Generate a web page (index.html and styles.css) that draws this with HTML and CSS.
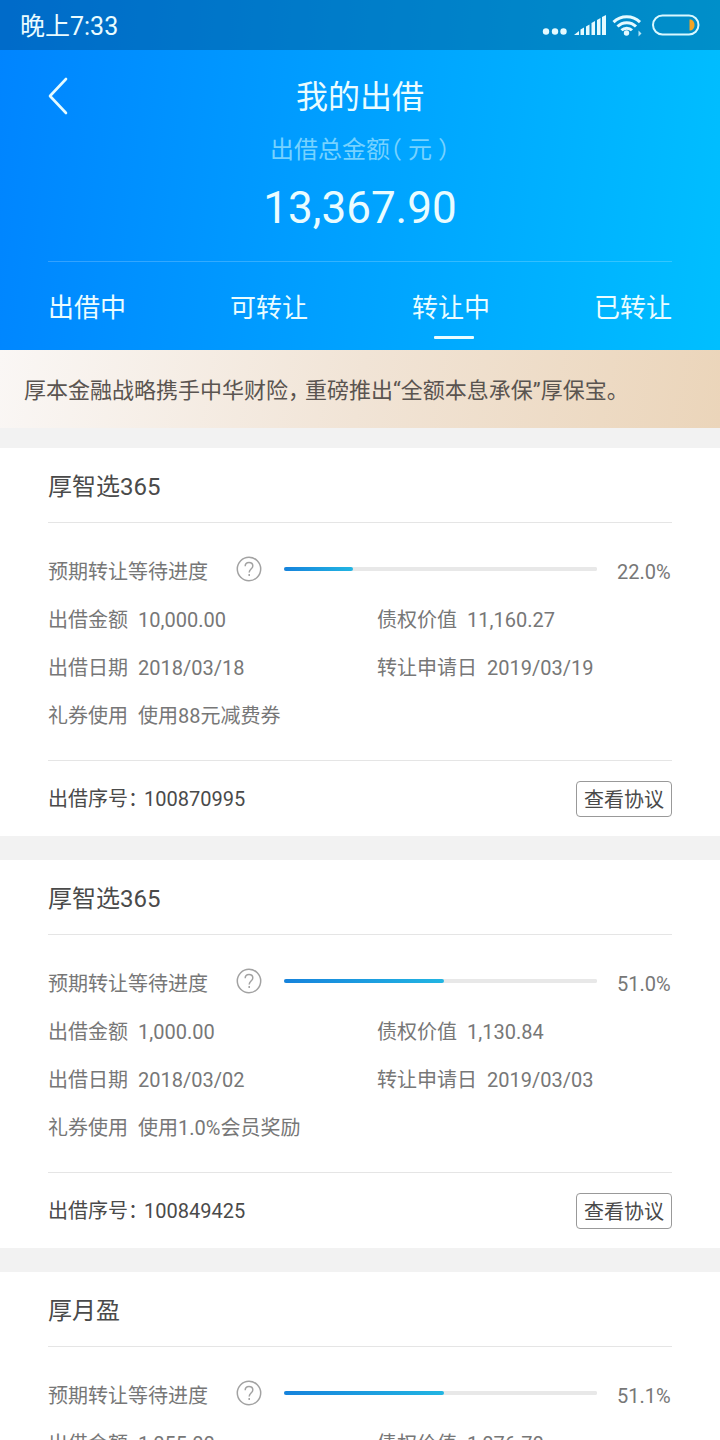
FILE: index.html
```html
<!DOCTYPE html>
<html lang="zh-CN">
<head>
<meta charset="utf-8">
<meta name="viewport" content="width=device-width, initial-scale=1">
<title>我的出借</title>
<link rel="stylesheet" href="styles.css">
</head>
<body>
<div class="app">
  <header class="hero">
    <div class="status">
      <span class="status-time">晚上7:33</span>
      <svg class="status-icons" width="160" height="30" viewBox="0 0 160 30" fill="none" aria-hidden="true">
        <g fill="#e4faff">
          <circle cx="6" cy="21.500" r="3.200"/><circle cx="15" cy="21.500" r="3.200"/><circle cx="23.500" cy="21.500" r="3.200"/>
          <path d="M34 25l5-4v4zM40.500 19.500l3.500-2v7.500h-3.500zM46 16.500l3.500-2V25H46zM51.500 13l3.500-2v14h-3.500zM57 10l3.500-2v17H57zM62 7l4-2v20h-4z"/>
          <circle cx="86.500" cy="23" r="2.700"/>
          <path d="M98.500 20.500l3 3-3 3z" opacity=".8"/>
        </g>
        <path d="M73.500 12.200a19 19 0 0 1 26.500 0M77.500 16.500a13 13 0 0 1 18.500 0M81.500 20.300a7.500 7.500 0 0 1 10.500 0" stroke="#e4faff" stroke-width="3"/>
        <rect x="113" y="5.500" width="45.500" height="19" rx="9.500" stroke="#d9f8ff" stroke-width="2"/>
        <path d="M149.500 9.500c3 0 5 2 5 5.500s-2 5.500-5 5.500z" fill="#f5a524"/>
      </svg>
    </div>
    <div class="titlebar">
      <button class="back" type="button" aria-label="返回">
        <svg width="20" height="38" viewBox="0 0 20 38" fill="none" stroke="#e4fbff" stroke-width="2.600" stroke-linecap="round" stroke-linejoin="round"><path d="M18 2L2 19l16 17"/></svg>
      </button>
      <h1 class="title">我的出借</h1>
    </div>
    <p class="total-label">出借总金额（<span class="unit">元</span>）</p>
    <p class="total">13,367.90</p>
    <nav class="tabs">
      <a class="tab" href="#lending">出借中</a>
      <a class="tab" href="#transferable">可转让</a>
      <a class="tab tab-active" href="#transferring" aria-current="page">转让中</a>
      <a class="tab" href="#transferred">已转让</a>
    </nav>
  </header>

  <p class="banner">厚本金融战略携手中华财险<span class="punct">，</span>重磅推出“全额本息承保”厚保宝。</p>

  <main class="list">
    <article class="card">
      <h2 class="card-title">厚智选365</h2>
      <div class="card-body">
        <div class="progress-row">
          <label for="p1">预期转让等待进度</label>
          <button class="help" type="button" aria-label="说明"><svg width="26" height="26" viewBox="0 0 26 26" fill="none" stroke="#a2a2a2" stroke-width="1.500"><circle cx="13" cy="13" r="11.700"/><path d="M9.200 10.300c0-2.300 1.600-3.800 3.800-3.800s3.800 1.400 3.800 3.400c0 3-3.600 3.200-3.600 6.500M13.200 18v2"/></svg></button>
          <progress class="bar" id="p1" value="22" max="100"></progress>
          <span class="percent">22.0%</span>
        </div>
        <dl class="facts">
          <div class="fact"><dt>出借金额</dt><dd>10,000.00</dd></div>
          <div class="fact"><dt>债权价值</dt><dd>11,160.27</dd></div>
          <div class="fact"><dt>出借日期</dt><dd>2018/03/18</dd></div>
          <div class="fact"><dt>转让申请日</dt><dd>2019/03/19</dd></div>
          <div class="fact"><dt>礼券使用</dt><dd>使用88元减费券</dd></div>
        </dl>
      </div>
      <footer class="card-foot">
        <span>出借序号<span class="punct">：</span>100870995</span>
        <button class="agreement" type="button">查看协议</button>
      </footer>
    </article>

    <article class="card">
      <h2 class="card-title">厚智选365</h2>
      <div class="card-body">
        <div class="progress-row">
          <label for="p2">预期转让等待进度</label>
          <button class="help" type="button" aria-label="说明"><svg width="26" height="26" viewBox="0 0 26 26" fill="none" stroke="#a2a2a2" stroke-width="1.500"><circle cx="13" cy="13" r="11.700"/><path d="M9.200 10.300c0-2.300 1.600-3.800 3.800-3.800s3.800 1.400 3.800 3.400c0 3-3.600 3.200-3.600 6.500M13.200 18v2"/></svg></button>
          <progress class="bar" id="p2" value="51" max="100"></progress>
          <span class="percent">51.0%</span>
        </div>
        <dl class="facts">
          <div class="fact"><dt>出借金额</dt><dd>1,000.00</dd></div>
          <div class="fact"><dt>债权价值</dt><dd>1,130.84</dd></div>
          <div class="fact"><dt>出借日期</dt><dd>2018/03/02</dd></div>
          <div class="fact"><dt>转让申请日</dt><dd>2019/03/03</dd></div>
          <div class="fact"><dt>礼券使用</dt><dd>使用1.0%会员奖励</dd></div>
        </dl>
      </div>
      <footer class="card-foot">
        <span>出借序号<span class="punct">：</span>100849425</span>
        <button class="agreement" type="button">查看协议</button>
      </footer>
    </article>

    <article class="card">
      <h2 class="card-title">厚月盈</h2>
      <div class="card-body">
        <div class="progress-row">
          <label for="p3">预期转让等待进度</label>
          <button class="help" type="button" aria-label="说明"><svg width="26" height="26" viewBox="0 0 26 26" fill="none" stroke="#a2a2a2" stroke-width="1.500"><circle cx="13" cy="13" r="11.700"/><path d="M9.200 10.300c0-2.300 1.600-3.800 3.800-3.800s3.800 1.400 3.800 3.400c0 3-3.600 3.200-3.600 6.500M13.200 18v2"/></svg></button>
          <progress class="bar" id="p3" value="51.1" max="100"></progress>
          <span class="percent">51.1%</span>
        </div>
        <dl class="facts">
          <div class="fact"><dt>出借金额</dt><dd>1,055.00</dd></div>
          <div class="fact"><dt>债权价值</dt><dd>1,076.70</dd></div>
        </dl>
      </div>
    </article>
  </main>
</div>
</body>
</html>
```
FILE: styles.css
```css
* { box-sizing: border-box; }

body {
  margin: 0;
  background: #f2f2f2;
  color: #777;
  font-family: Roboto, "Noto Sans CJK SC", sans-serif;
  font-size: 20px;
  line-height: 24px;
}

h1, h2, p, dl, dd { margin: 0; font-weight: 400; }

button {
  padding: 0;
  border: 0;
  background: none;
  color: inherit;
  font: inherit;
}

svg { display: block; }

.app {
  display: flex;
  flex-direction: column;
  height: 100vh;
  overflow: hidden;
}

.hero {
  flex: none;
  background: linear-gradient(96deg, #0084ff, #00bfff);
  color: #eafcff;
  text-align: center;
}

.status {
  display: flex;
  align-items: center;
  justify-content: space-between;
  height: 50px;
  padding: 0 20px;
  background: rgba(0, 60, 100, 0.35);
}

.status-time { padding-top: 3px; font-size: 25px; }

.titlebar {
  display: grid;
  grid-template-columns: 48px 1fr 48px;
  align-items: center;
  padding: 24px 48px 0;
}

.title { padding-top: 3px; font-size: 32px; line-height: 40px; }

.total-label {
  padding-top: 17px;
  color: #76d2ff;
  font-size: 24px;
  line-height: 32px;
  font-feature-settings: "halt";
}

.unit { margin: 0 6px; }
.punct { margin-right: 6px; font-feature-settings: "halt"; }

.total {
  padding-top: 14px;
  font-size: 44px;
  line-height: 56px;
}

.tabs {
  display: flex;
  justify-content: space-between;
  margin: 25px 48px 0;
  padding-top: 28px;
  border-top: 1px solid rgba(255, 255, 255, 0.2);
  font-size: 26px;
  line-height: 36px;
}

.tab {
  height: 60px;
  color: inherit;
  text-decoration: none;
}

.tab-active::after {
  content: "";
  display: block;
  width: 40px;
  height: 3px;
  margin: 10px 0 0 22px;
  border-radius: 1px;
  background: #eafcff;
}

.banner {
  flex: none;
  padding: 26px 24px 22px;
  background: linear-gradient(100deg, #faf7f5, #f1e4d6 50%, #ebd5ba);
  color: #5a5450;
  font-size: 22px;
  line-height: 30px;
}

.list {
  display: flex;
  flex: 1;
  flex-direction: column;
  gap: 24px;
  min-height: 0;
  padding-top: 20px;
  overflow-y: auto;
  scrollbar-width: none;
}

.card {
  flex: none;
  padding: 0 48px;
  background: #fff;
}

.card-title {
  padding: 24px 0 20px;
  border-bottom: 1px solid #e5e5e5;
  color: #4a4a4a;
  font-size: 24px;
  line-height: 30px;
}

.card-body { padding: 24px 0 20px; }

.progress-row {
  display: flex;
  align-items: center;
  height: 49px;
}

.help { margin: 0 22px 5px 28px; }

.bar {
  flex: 1;
  width: 0;
  height: 4px;
  margin-bottom: 5px;
  border: 0;
  border-radius: 2px;
  background: #e8e8e8;
  appearance: none;
}

.bar::-webkit-progress-bar { border-radius: 2px; background: #e8e8e8; }

.bar::-webkit-progress-value {
  border-radius: 2px;
  background: linear-gradient(90deg, #1683dc, #22b5e2);
}

.percent { width: 75px; padding-left: 20px; }

.facts {
  display: grid;
  grid-template-columns: 329fr 295fr;
  line-height: 48px;
}

.fact { display: flex; gap: 10px; }

.card-foot {
  display: flex;
  align-items: center;
  justify-content: space-between;
  height: 76px;
  border-top: 1px solid #e5e5e5;
  color: #4a4a4a;
}

.agreement {
  padding: 6px 7px 4px;
  border: 1px solid #999;
  border-radius: 4px;
}
```
